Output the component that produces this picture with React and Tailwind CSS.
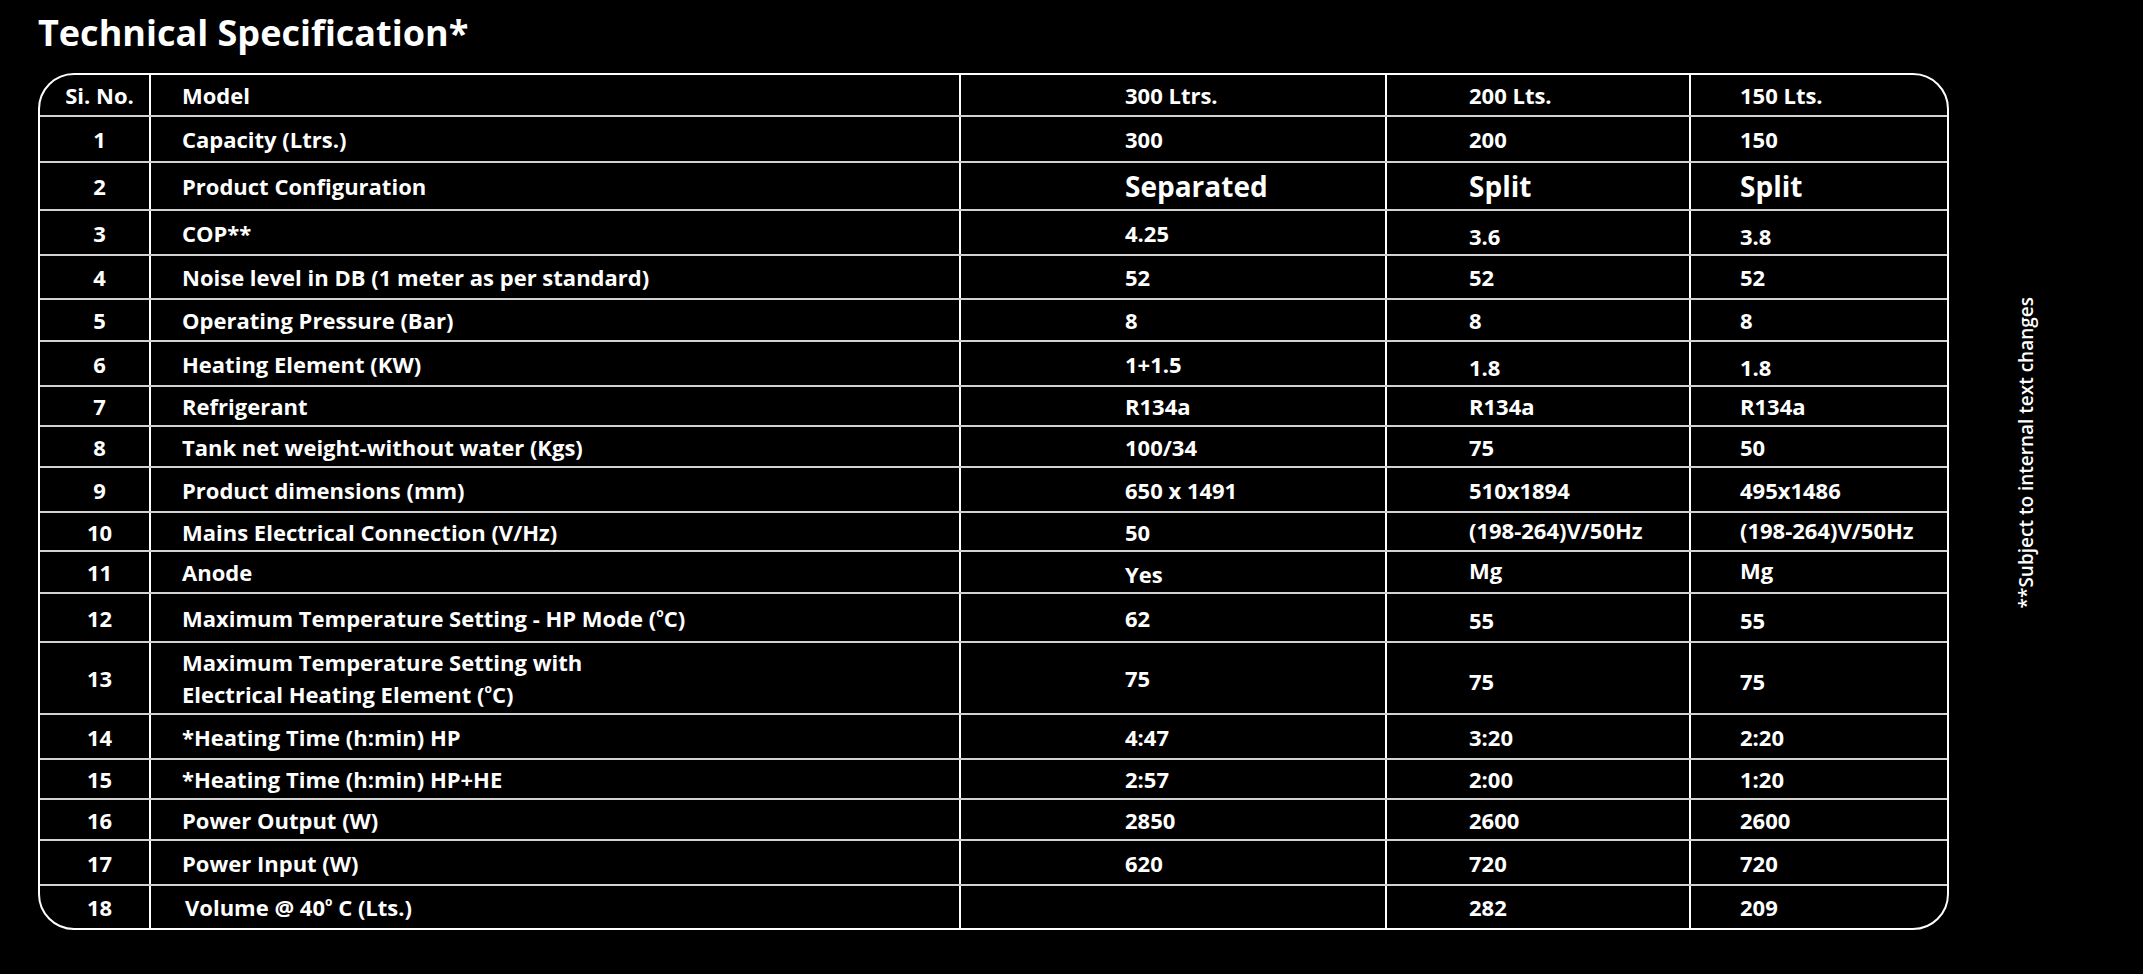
const OFFSET = {
  0: "",
  2: "pt-[4px]",
  3: "pt-[6px]",
  "-2": "pb-[4px]",
};

function Deg() {
  return <sup className="text-[12px] relative -top-[10px]">o</sup>;
}

const rows = [
  { h: "h-[42px]", cells: ["Si. No.", "Model", "300 Ltrs.", "200 Lts.", "150 Lts."] },
  { h: "h-[46px]", cells: ["1", "Capacity (Ltrs.)", "300", "200", "150"] },
  { h: "h-[48px]", big: true, cells: ["2", "Product Configuration", "Separated", "Split", "Split"] },
  { h: "h-[45px]", cells: ["3", "COP**", "4.25", "3.6", "3.8"], dy: [0, 0, 0, 3, 3] },
  { h: "h-[44px]", cells: ["4", "Noise level in DB (1 meter as per standard)", "52", "52", "52"] },
  { h: "h-[42px]", cells: ["5", "Operating Pressure (Bar)", "8", "8", "8"] },
  { h: "h-[45px]", cells: ["6", "Heating Element (KW)", "1+1.5", "1.8", "1.8"], dy: [0, 0, 0, 3, 3] },
  { h: "h-[40px]", cells: ["7", "Refrigerant", "R134a", "R134a", "R134a"] },
  { h: "h-[41px]", cells: ["8", "Tank net weight-without water (Kgs)", "100/34", "75", "50"] },
  { h: "h-[45px]", cells: ["9", "Product dimensions (mm)", "650 x 1491", "510x1894", "495x1486"] },
  { h: "h-[39px]", cells: ["10", "Mains Electrical Connection (V/Hz)", "50", "(198-264)V/50Hz", "(198-264)V/50Hz"], dy: [0, 0, 0, -2, -2] },
  { h: "h-[42px]", cells: ["11", "Anode", "Yes", "Mg", "Mg"], dy: [0, 0, 2, -2, -2] },
  {
    h: "h-[49px]",
    cells: ["12", <>Maximum Temperature Setting - HP Mode (<Deg />C)</>, "62", "55", "55"],
    dy: [0, 0, 0, 2, 2],
  },
  {
    h: "h-[72px]",
    cells: [
      "13",
      <>
        Maximum Temperature Setting with
        <br />
        Electrical Heating Element (<Deg />C)
      </>,
      "75",
      "75",
      "75",
    ],
    dy: [0, 0, 0, 3, 3],
  },
  { h: "h-[45px]", cells: ["14", "*Heating Time (h:min) HP", "4:47", "3:20", "2:20"] },
  { h: "h-[40px]", cells: ["15", "*Heating Time (h:min) HP+HE", "2:57", "2:00", "1:20"] },
  { h: "h-[41px]", cells: ["16", "Power Output (W)", "2850", "2600", "2600"] },
  { h: "h-[45px]", cells: ["17", "Power Input (W)", "620", "720", "720"] },
  {
    h: "h-[42px]",
    cells: ["18", <span className="pl-[3px]">Volume @ 40<Deg /> C (Lts.)</span>, "", "282", "209"],
  },
];

const COLS = [
  "justify-center pl-[10px] border-r-2 border-white",
  "pl-[31px] border-r-2 border-white",
  "pl-[164px] border-r-2 border-white",
  "pl-[82px] border-r-2 border-white",
  "pl-[49px]",
];

function Row({ row, last }) {
  return (
    <div
      className={`grid grid-cols-[111px_810px_426px_304px_256px] ${row.h} ${
        last ? "" : "border-b-2 border-[#d2d2d2]"
      }`}
    >
      {row.cells.map((c, i) => (
        <div
          key={i}
          className={`flex items-center ${COLS[i]} ${OFFSET[row.dy ? row.dy[i] : 0]} ${
            row.big && i > 1 ? "text-[28px]" : "text-[22px]"
          } ${i === 1 && row.h === "h-[72px]" ? "leading-[32px]" : "leading-[30px]"}`}
        >
          <span>{c}</span>
        </div>
      ))}
    </div>
  );
}

export default function App() {
  return (
    <div className="min-h-screen w-full bg-black text-white font-['Open_Sans',sans-serif] font-bold">
      <h1 className="pl-[38px] pt-[13px] text-[36px] leading-[40px] font-bold">
        Technical Specification*
      </h1>

      <div className="flex items-start mt-[20px]">
        <div className="ml-[38px] w-[1911px] border-2 border-white rounded-[36px] overflow-hidden">
          {rows.map((r, i) => (
            <Row key={i} row={r} last={i === rows.length - 1} />
          ))}
        </div>

        <div className="ml-[63px] mt-[224px] [writing-mode:vertical-rl] rotate-180 text-[19px] leading-[28px] whitespace-nowrap font-semibold">
          **Subject to internal text changes
        </div>
      </div>
    </div>
  );
}
